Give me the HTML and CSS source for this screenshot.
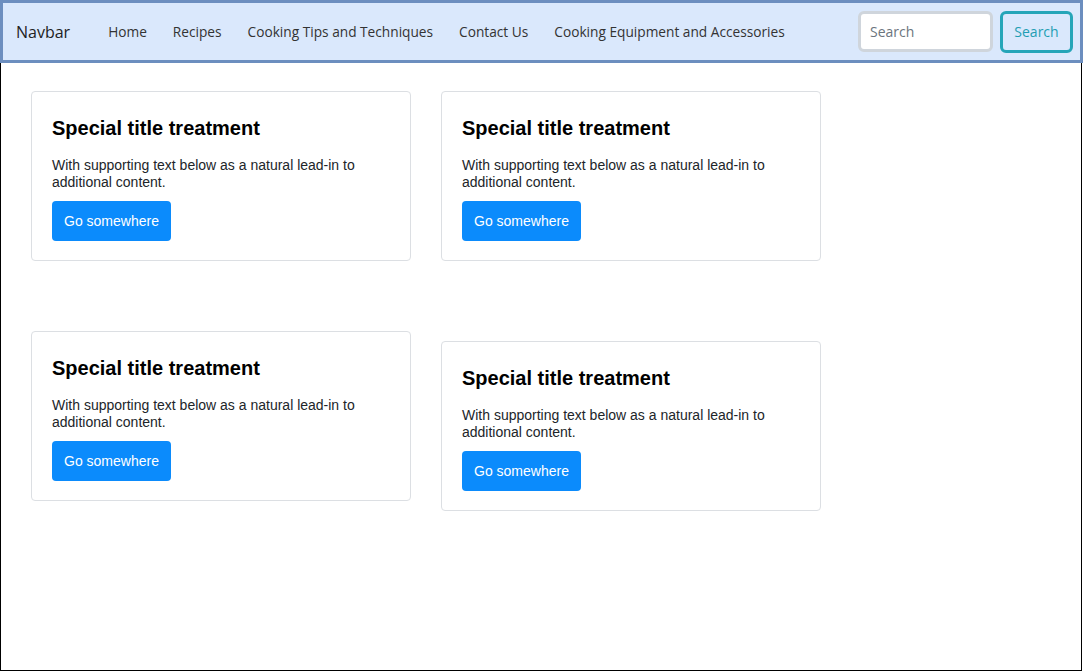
FILE: index.html
```html
<!DOCTYPE html>
<html lang="en">
<head>
<meta charset="utf-8">
<title>Navbar</title>
<link rel="stylesheet" href="styles.css">
</head>
<body>
<div class="page">
  <nav class="navbar">
    <a class="brand" href="#">Navbar</a>
    <ul class="nav-links">
      <li><a href="#">Home</a></li>
      <li><a href="#">Recipes</a></li>
      <li><a href="#">Cooking Tips and Techniques</a></li>
      <li><a href="#">Contact Us</a></li>
      <li><a href="#">Cooking Equipment and Accessories</a></li>
    </ul>
    <form class="search">
      <input class="search-input" type="text" placeholder="Search">
      <button class="search-btn" type="button">Search</button>
    </form>
  </nav>
  <main class="main">
    <div class="grid">
      <div class="card">
        <h5 class="card-title">Special title treatment</h5>
        <p class="card-text">With supporting text below as a natural lead-in to additional content.</p>
        <a class="btn-primary" href="#">Go somewhere</a>
      </div>
      <div class="card">
        <h5 class="card-title">Special title treatment</h5>
        <p class="card-text">With supporting text below as a natural lead-in to additional content.</p>
        <a class="btn-primary" href="#">Go somewhere</a>
      </div>
      <div class="card">
        <h5 class="card-title">Special title treatment</h5>
        <p class="card-text">With supporting text below as a natural lead-in to additional content.</p>
        <a class="btn-primary" href="#">Go somewhere</a>
      </div>
      <div class="card card-shift">
        <h5 class="card-title">Special title treatment</h5>
        <p class="card-text">With supporting text below as a natural lead-in to additional content.</p>
        <a class="btn-primary" href="#">Go somewhere</a>
      </div>
    </div>
  </main>
</div>
</body>
</html>
```
FILE: styles.css
```css
* { box-sizing: border-box; }
html, body { margin: 0; padding: 0; background: #fff; }
body { font-family: "Liberation Sans", Arial, sans-serif; }

.page {
  width: 1083px;
  height: 672px;
  display: flex;
  flex-direction: column;
}

.navbar {
  height: 63px;
  flex: none;
  background: #dae8fc;
  border: 3px solid #6c8ebf;
  display: flex;
  align-items: center;
  padding: 0 7px 0 13px;
  font-family: "Open Sans", sans-serif;
}

.brand {
  color: #222;
  text-decoration: none;
  font-size: 16px;
  margin-right: 25px;
}

.nav-links {
  list-style: none;
  margin: 0;
  padding: 0;
  display: flex;
  flex: 1;
}
.nav-links a {
  display: block;
  padding: 0 13px;
  color: #333;
  text-decoration: none;
  font-size: 13.7px;
}

.search {
  display: flex;
  gap: 7px;
  margin: 0;
}
.search-input {
  width: 135px;
  height: 41px;
  border: 3px solid #cfd5dc;
  border-radius: 6px;
  background: #fff;
  padding: 0 9px;
  font-family: "Open Sans", sans-serif;
  font-size: 14px;
  color: #495057;
  outline: none;
}
.search-input::placeholder { color: #6c757d; }
.search-btn {
  width: 73px;
  height: 42px;
  border: 3px solid #25a5b8;
  border-radius: 6px;
  background: transparent;
  color: #1f9eb3;
  font-family: "Open Sans", sans-serif;
  font-size: 14px;
  padding: 0;
}

.main {
  flex: 1;
  width: 1082px;
  margin-bottom: 1px;
  border: 1px solid #000;
  border-top: none;
  padding: 28px 30px;
}

.grid {
  display: grid;
  grid-template-columns: 380px 380px;
  column-gap: 30px;
  row-gap: 70px;
  align-items: start;
}

.card {
  border: 1px solid #dcdfe3;
  border-radius: 4px;
  padding: 24px 20px 19px;
  background: #fff;
}
.card-shift { margin-top: 10px; }

.card-title {
  margin: 0 0 17px;
  font-size: 20px;
  line-height: 24px;
  font-weight: 700;
  color: #000;
}
.card-text {
  margin: 0 0 10px;
  font-size: 14px;
  line-height: 17px;
  color: #212529;
}
.btn-primary {
  display: inline-block;
  height: 40px;
  line-height: 40px;
  padding: 0 12px;
  background: #0b8bfc;
  color: #fff;
  border-radius: 4px;
  font-size: 14px;
  text-decoration: none;
}
```
